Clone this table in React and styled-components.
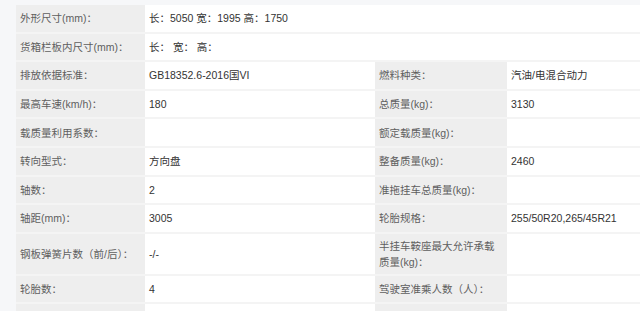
import React from "react";
import styled, { createGlobalStyle } from "styled-components";

const GlobalStyle = createGlobalStyle`
  html, body {
    margin: 0;
    padding: 0;
    background: #f6f7f9;
    overflow: hidden;
  }
  body {
    font-family: "Liberation Sans", Arial, "Noto Sans CJK SC", sans-serif;
  }
`;

const Page = styled.div`
  padding: 5px 0 0 16px;
`;

const Table = styled.table`
  width: 624px;
  table-layout: fixed;
  border-collapse: separate;
  border-spacing: 0;
  font-size: 10.5px;
  line-height: 16px;
`;

const Col = styled.col`
  width: ${(p) => (p.$w ? `${p.$w}px` : "auto")};
`;

const Cell = styled.td`
  box-sizing: border-box;
  height: 28.6px;
  padding: 4px 4px;
  vertical-align: middle;
  border-bottom: 2px solid #f4f4f4;
  background: ${(p) => (p.$label ? "#eeeeee" : "#ffffff")};
  color: ${(p) => (p.$label ? "#5e5e5e" : "#333333")};
  word-break: break-all;
`;

const Label = ({ children }) => <Cell $label>{children}</Cell>;
const Value = ({ children, span }) => <Cell colSpan={span}>{children}</Cell>;

const wide = [
  ["外形尺寸(mm)：", "长：5050 宽：1995 高：1750"],
  ["货箱栏板内尺寸(mm)：", "长： 宽： 高："],
];

const rows = [
  ["排放依据标准：", "GB18352.6-2016国VI", "燃料种类：", "汽油/电混合动力"],
  ["最高车速(km/h)：", "180", "总质量(kg)：", "3130"],
  ["载质量利用系数：", "", "额定载质量(kg)：", ""],
  ["转向型式：", "方向盘", "整备质量(kg)：", "2460"],
  ["轴数：", "2", "准拖挂车总质量(kg)：", ""],
  ["轴距(mm)：", "3005", "轮胎规格：", "255/50R20,265/45R21"],
  ["钢板弹簧片数（前/后）：", "-/-", "半挂车鞍座最大允许承载质量(kg)：", ""],
  ["轮胎数：", "4", "驾驶室准乘人数（人）：", ""],
  ["", "", "", ""],
];

export default function App() {
  return (
    <>
      <GlobalStyle />
      <Page>
        <Table>
          <colgroup>
            <Col $w={129} />
            <Col $w={230} />
            <Col $w={132} />
            <Col />
          </colgroup>
          <tbody>
            {wide.map(([l, v]) => (
              <tr key={l}>
                <Label>{l}</Label>
                <Value span={3}>{v}</Value>
              </tr>
            ))}
            {rows.map(([l1, v1, l2, v2], i) => (
              <tr key={i}>
                <Label>{l1}</Label>
                <Value>{v1}</Value>
                <Label>{l2}</Label>
                <Value>{v2}</Value>
              </tr>
            ))}
          </tbody>
        </Table>
      </Page>
    </>
  );
}
